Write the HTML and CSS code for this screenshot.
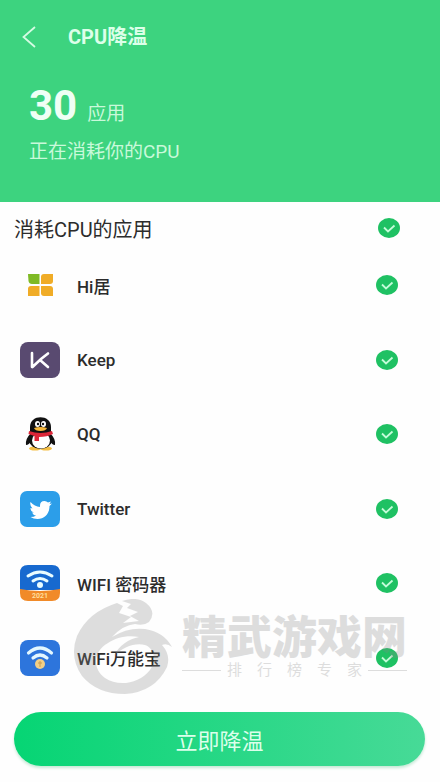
FILE: index.html
```html
<!DOCTYPE html>
<html lang="zh-CN">
<head>
<meta charset="utf-8">
<meta name="viewport" content="width=device-width, initial-scale=1">
<title>CPU降温</title>
<link rel="stylesheet" href="styles.css">
</head>
<body>
<svg class="defs" aria-hidden="true">
  <symbol id="tick" viewBox="0 0 22 20"><path d="M6 9.5 L10 13.5 L16.5 7.5" fill="none" stroke="#c4fbd9" stroke-width="1.8"/></symbol>
</svg>
<header class="hero">
  <div class="bar">
    <button class="back" type="button" aria-label="返回">
      <svg viewBox="0 0 14 22" width="14" height="22"><path d="M13 1 L1.500 11 L13 21" fill="none" stroke="#d5fbe3" stroke-width="1.800"/></svg>
    </button>
    <h1 class="title">CPU降温</h1>
  </div>
  <p class="count"><strong class="number">30</strong><span>应用</span></p>
  <p class="status">正在消耗你的CPU</p>
</header>
<main class="content">
  <label class="heading">
    <span class="heading-text">消耗CPU的应用</span>
    <span class="check"><input type="checkbox" checked><svg><use href="#tick"/></svg></span>
  </label>
  <ul class="apps">
    <li><label class="app">
      <svg class="icon" viewBox="0 0 40 36">
        <path d="M8 7h11.500v10H12q-3 0-3.500-3z" fill="#7fba25"/>
        <path d="M21 10q0-3 3-3h9v7q0 3-3 3h-9z" fill="#f0ac27"/>
        <path d="M8 22q0-3 3-3h8.500v10H8z" fill="#f0ac27"/>
        <path d="M21 19h9q3 0 3 3v7h-9q-3 0-3-3z" fill="#f0ac27"/>
      </svg>
      <span class="name">Hi居</span>
      <span class="check"><input type="checkbox" checked><svg><use href="#tick"/></svg></span>
    </label></li>
    <li><label class="app">
      <svg class="icon" viewBox="0 0 40 36">
        <rect width="40" height="36" rx="8" fill="#594a70"/>
        <path d="M12 11v14M28 11.500 L21 17 L12.500 25M20 18 L28 25" fill="none" stroke="#fff" stroke-width="2.600" stroke-linecap="round"/>
      </svg>
      <span class="name">Keep</span>
      <span class="check"><input type="checkbox" checked><svg><use href="#tick"/></svg></span>
    </label></li>
    <li><label class="app">
      <svg class="icon" viewBox="0 0 40 36">
        <ellipse cx="15" cy="32.500" rx="6" ry="2" fill="#f4be45"/>
        <ellipse cx="26" cy="32.500" rx="6" ry="2" fill="#f4be45"/>
        <path d="M11 17q-6 6-5 12 3 0 5-4zM30 17q6 6 5 12-3 0-5-4z" fill="#111"/>
        <ellipse cx="20.500" cy="23.500" rx="11.500" ry="9.500" fill="#111"/>
        <ellipse cx="21" cy="24.500" rx="9" ry="8" fill="#fff"/>
        <path d="M10 17V11C10-2 31-2 31 11v6z" fill="#111"/>
        <ellipse cx="17.500" cy="8" rx="2.500" ry="3" fill="#fff"/>
        <ellipse cx="23.500" cy="8" rx="2.500" ry="3" fill="#fff"/>
        <circle cx="18" cy="8" r="1.200" fill="#111"/><circle cx="23" cy="8" r="1.200" fill="#111"/>
        <path d="M14 12q6.500-2 13 0-1 3-6.500 3T14 12z" fill="#f5b73c"/>
        <path d="M9 15q11.500 4 23 0l1 3q-6 3-14 3v4h-4.500v-5L8.500 18z" fill="#dc2638"/>
      </svg>
      <span class="name">QQ</span>
      <span class="check"><input type="checkbox" checked><svg><use href="#tick"/></svg></span>
    </label></li>
    <li><label class="app">
      <svg class="icon" viewBox="0 0 40 36">
        <rect width="40" height="36" rx="7" fill="#2c9ee9"/>
        <path d="M10.500 11q4 4.500 9.500 5-.500-6 4.500-6 2 0 3.500 1.500l3-1-1.500 2.500 2.500-.500-2.500 2.500C29.500 23 24.500 28 17.500 28q-4 0-7-2 3.500 0 5.500-1.500-3-.500-4-3h2q-3.500-1-3.500-4.500l2 .500q-3-3-2-6.500z" fill="#fff"/>
      </svg>
      <span class="name">Twitter</span>
      <span class="check"><input type="checkbox" checked><svg><use href="#tick"/></svg></span>
    </label></li>
    <li><label class="app">
      <svg class="icon" viewBox="0 0 40 36">
        <path d="M0 25V8q0-8 8-8h24q8 0 8 8v17z" fill="#1769cf"/>
        <path d="M0 24q20 4 40 0v4q0 8-8 8H8q-8 0-8-8z" fill="#f18a28"/>
        <g fill="none" stroke="#e9fcff" stroke-width="3" stroke-linecap="round"><path d="M8 11q12-8 24 0M13 16q7-5 14 0"/></g>
        <circle cx="20" cy="20" r="3" fill="#e9fcff"/>
        <text class="year" x="20" y="33" text-anchor="middle">2021</text>
      </svg>
      <span class="name">WIFI 密码器</span>
      <span class="check"><input type="checkbox" checked><svg><use href="#tick"/></svg></span>
    </label></li>
    <li><label class="app">
      <svg class="icon" viewBox="0 0 40 36">
        <rect width="40" height="36" rx="8" fill="#2d75dc"/>
        <g fill="none" stroke="#e3f7ff" stroke-width="3.200" stroke-linecap="round"><path d="M8.500 13q11.500-10 23 0M13 18q7-6 14 0"/></g>
        <circle cx="20" cy="24" r="5" fill="#f2cf86"/>
        <path d="M20 21v6M18 23h4" stroke="#c99b50" stroke-width="1"/>
      </svg>
      <span class="name">WiFi万能宝</span>
      <span class="check"><input type="checkbox" checked><svg><use href="#tick"/></svg></span>
    </label></li>
  </ul>
  <div class="watermark">
    <svg class="mark" viewBox="0 0 100 96" width="100" height="96">
      <path fill="#888" d="M44 4L50 7 46 14 58 18 50 24 66 22 57 17 65 13 54 9 58 5 49 2Q64-3 73 4 84 13 76 23 71 27 62 25 50 26 39 38 55 28 72 30 91 33 99 48 94 44 89 46 98 56 94 68 82 93 52 95 24 95 9 77-4 58 4 37 15 13 44 4zM35 44C20 52 19 70 32 79 45 88 66 85 77 71 84 61 81 49 72 46 63 43 49 48 41 57 46 46 56 40 66 38 53 36 43 39 35 44z"/>
    </svg>
    <div class="brand">
      <span class="brand-name">精武游戏网</span>
      <span class="tagline"><i></i><span class="words"><span>排</span><span>行</span><span>榜</span><span>专</span><span>家</span></span><i></i></span>
    </div>
  </div>
</main>
<footer class="footer"><button class="cool" type="button">立即降温</button></footer>
</body>
</html>
```
FILE: styles.css
```css
* { box-sizing: border-box; }
body {
  margin: 0;
  min-height: 100vh;
  display: flex;
  flex-direction: column;
  background: #fefefe;
  color: #2c2c2c;
  font-family: Roboto, "Noto Sans CJK SC", sans-serif;
}
h1, p, ul { margin: 0; padding: 0; }
button { border: 0; padding: 0; font: inherit; cursor: pointer; }
.defs { position: absolute; width: 0; height: 0; }

.hero {
  background: #3dd37f;
  color: #c9f9da;
  padding: 20px 22px 36px;
}
.bar { display: flex; align-items: center; gap: 32px; height: 34px; }
.back { display: flex; background: none; }
.title { font-size: 20px; line-height: 24px; font-weight: 700; color: #dcffe9; }
.count {
  display: flex;
  align-items: baseline;
  gap: 10px;
  margin: 28px 0 0 7px;
  font-size: 19px;
  line-height: 48px;
}
.number { font-size: 42px; font-weight: 700; color: #effff5; }
.status { margin: 0 0 0 7px; font-size: 19px; line-height: 28px; }

.content { position: relative; flex: 1; display: flex; flex-direction: column; }
.heading {
  display: flex;
  align-items: center;
  height: 46px;
  padding: 6px 40px 0 14px;
  font-size: 20px;
}
.heading-text { flex: 1; }
.apps {
  flex: 1;
  display: grid;
  grid-auto-rows: 1fr;
  list-style: none;
}
.app {
  display: flex;
  align-items: center;
  gap: 17px;
  height: 100%;
  padding: 0 42px 0 20px;
  font-size: 17px;
  font-weight: 500;
}
.icon { width: 40px; height: 36px; flex: none; }
.year { font: 700 7px Roboto, sans-serif; fill: #ffdf9c; }
.name { flex: 1; }
.check { display: grid; width: 22px; height: 20px; }
.check > * { grid-area: 1 / 1; width: 22px; height: 20px; margin: 0; }
.check input { appearance: none; border-radius: 50%; background: #d5d5d5; }
.check input:checked { background: #1fc163; }
.check svg { pointer-events: none; z-index: 1; }

.watermark {
  position: absolute;
  left: 73px;
  right: 31px;
  bottom: 0;
  display: flex;
  gap: 9px;
  opacity: 0.27;
  color: #888;
  pointer-events: none;
  z-index: 2;
}
.mark { flex: none; }
.brand { padding-top: 11px; white-space: nowrap; }
.brand-name {
  display: block;
  font: 900 45px/50px "Noto Sans CJK SC", sans-serif;
}
.tagline {
  display: flex;
  align-items: center;
  gap: 6px;
  font-size: 15px;
  line-height: 20px;
}
.tagline i { flex: 1; height: 1px; background: #888; }
.words { display: flex; gap: 15px; }

.footer { padding: 17px 15px 16px 14px; }
.cool {
  width: 100%;
  height: 54px;
  border-radius: 27px;
  background: linear-gradient(90deg, #06d574, #47da97);
  box-shadow: 0 2px 3px #c5e8d5;
  color: #dcffeb;
  font-size: 22px;
}
```
